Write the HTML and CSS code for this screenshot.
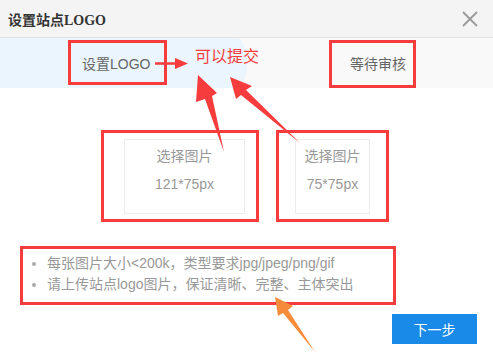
FILE: index.html
```html
<!DOCTYPE html>
<html lang="zh">
<head>
<meta charset="utf-8">
<title>设置站点LOGO</title>
<link rel="stylesheet" href="styles.css">
</head>
<body>
<div class="dialog">
  <div class="dialog-header">
    <h1 class="dialog-title">设置站点LOGO</h1>
    <button class="close-btn" aria-label="关闭">
      <svg width="16" height="16" viewBox="0 0 16 16"><path d="M1 1 L15 15 M15 1 L1 15" stroke="#9a9a9a" stroke-width="1.8" fill="none"/></svg>
    </button>
  </div>
  <div class="steps">
    <div class="step step-active"><span>设置LOGO</span></div>
    <div class="step step-next"><span>等待审核</span></div>
  </div>
  <div class="uploads">
    <div class="upload upload-wide">
      <div class="upload-label">选择图片</div>
      <div class="upload-size">121*75px</div>
    </div>
    <div class="upload upload-square">
      <div class="upload-label">选择图片</div>
      <div class="upload-size">75*75px</div>
    </div>
  </div>
  <ul class="tips">
    <li>每张图片大小&lt;200k，类型要求jpg/jpeg/png/gif</li>
    <li>请上传站点logo图片，保证清晰、完整、主体突出</li>
  </ul>
  <div class="footer">
    <button class="next-btn">下一步</button>
  </div>

  <svg class="annotations" width="493" height="362" viewBox="0 0 493 362">
    <g fill="none" stroke="#f63c3c" stroke-width="3">
      <rect x="69.5" y="41.5" width="96" height="42"/>
      <rect x="330.5" y="41.5" width="84" height="45"/>
      <rect x="102.5" y="131.5" width="155" height="89"/>
      <rect x="277.5" y="131.5" width="110" height="89"/>
      <rect x="21.5" y="247.5" width="373" height="56"/>
    </g>
    <text x="195" y="62" class="anno-text">可以提交</text>
    <g fill="#f63c3c">
      <polygon points="155,62.3 175,62.3 175,58 188,63.5 175,69 175,64.7 155,64.7"/>
      <polygon points="198,75 217,93 212,96 224,152 205,99 196,102"/>
      <polygon points="230,77 252,86 246,90 300,143 241,95 236,99"/>
    </g>
    <polygon fill="#f68b3a" points="275,297 293,306 288,310 315,352 283,313 278,316"/>
  </svg>
</div>
</body>
</html>
```
FILE: styles.css
```css
* { box-sizing: border-box; }
html, body { margin: 0; padding: 0; background: #fff; }
body {
  font-family: "Liberation Sans", "Noto Sans CJK SC", sans-serif;
  font-size: 14px;
  color: #666;
}
.dialog {
  position: relative;
  width: 493px;
  height: 362px;
  overflow: hidden;
}
.dialog-header {
  height: 38px;
  background: #f4f4f4;
  border-bottom: 1px solid #e3e3e3;
  display: flex;
  align-items: center;
  justify-content: space-between;
  padding: 0 15px 0 8px;
}
.dialog-title {
  margin: 0;
  font-family: "Liberation Serif", "Noto Sans CJK SC", serif;
  font-size: 14px;
  font-weight: bold;
  color: #333;
}
.close-btn {
  border: 0;
  background: none;
  padding: 0;
  width: 16px;
  height: 16px;
  display: flex;
}
.steps {
  display: flex;
  height: 50px;
  background: #f9f9f9;
}
.step {
  display: flex;
  align-items: center;
  font-size: 14px;
  color: #666;
}
.step-active {
  width: 247px;
  padding-left: 82px;
  background: #eaf5fe;
  border-top-right-radius: 10px 25px;
  border-bottom-right-radius: 10px 25px;
}
.step-next {
  flex: 1;
  padding-left: 103px;
}
.uploads {
  display: flex;
  gap: 50px;
  padding-left: 124px;
  margin-top: 51px;
}
.upload {
  height: 75px;
  border: 1px solid #ececec;
  text-align: center;
  color: #999;
  padding-top: 6px;
}
.upload-wide { width: 121px; }
.upload-square { width: 75px; }
.upload-label { line-height: 20px; font-size: 14px; }
.upload-size { line-height: 20px; margin-top: 8px; font-size: 14px; }
.tips {
  margin: 39px 0 0 0;
  padding-left: 47px;
  color: #999;
  font-size: 14px;
  line-height: 21px;
  list-style: none;
}
.tips li { position: relative; }
.tips li::before {
  content: "";
  position: absolute;
  left: -15px;
  top: 9px;
  width: 4px;
  height: 4px;
  border-radius: 50%;
  background: #aaa;
}
.footer {
  display: flex;
  justify-content: flex-end;
  padding-right: 16px;
  margin-top: 19px;
}
.next-btn {
  width: 85px;
  height: 30px;
  border: 0;
  background: #1a8ae8;
  color: #fff;
  font-family: "Liberation Sans", "Noto Sans CJK SC", sans-serif;
  font-size: 14px;
  padding: 0;
}
.annotations {
  position: absolute;
  left: 0;
  top: 0;
  pointer-events: none;
}
.anno-text {
  font-family: "Noto Sans CJK SC", sans-serif;
  font-size: 16px;
  font-weight: 400;
  fill: #f63c3c;
}
```
